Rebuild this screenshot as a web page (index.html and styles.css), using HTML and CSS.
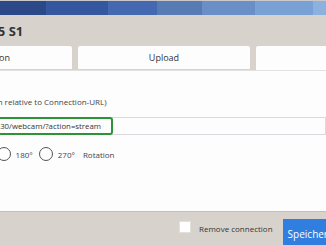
FILE: index.html
```html
<!DOCTYPE html>
<html lang="de">
<head>
  <meta charset="UTF-8">
  <meta name="viewport" content="width=device-width, initial-scale=1.0">
  <title>Drucker bearbeiten</title>
  <link rel="stylesheet" href="styles.css">
</head>
<body>

  <!-- Farbleiste oben -->
  <div class="topbar">
    <span class="s1"></span><span class="s2"></span><span class="s3"></span><span class="s4"></span><span class="s5"></span><span class="s6"></span><span class="s7"></span>
  </div>

  <div class="head">
    <h1 class="title">Ender-5 S1</h1>
  </div>

  <div class="tabs">
    <div class="tab">Connection</div>
    <div class="tab">Upload</div>
    <div class="tab active">Webcam</div>
  </div>

  <div class="content">
    <div class="lbl">Stream URL (absolute or given relative to Connection-URL)</div>
    <div class="field">
      <span class="hl">http://192.168.178.30/webcam/?action=stream</span>
    </div>
    <div class="radios">
      <span class="radio"></span><span class="rtext">90°</span>
      <span class="radio"></span><span class="rtext">180°</span>
      <span class="radio"></span><span class="rtext">270°</span>
      <span class="rtext rot">Rotation</span>
    </div>
  </div>

  <!-- Fusszeile -->
  <div class="foot">
    <span class="check"></span>
    <span class="foot-label">Remove connection</span>
    <button class="save">Speichern</button>
  </div>

</body>
</html>
```

FILE: styles.css
```css
* { margin: 0; padding: 0; box-sizing: border-box; }

body {
  font-family: 'Open Sans', 'Noto Sans', sans-serif;
  width: 326px;
  height: 245px;
  overflow: hidden;
  background: #d7d3cc;
  color: #333;
}

.topbar {
  display: flex;
  height: 15px;
  border-top: 1px solid #c9c9cc;
}

.topbar span { height: 100%; flex-shrink: 0; }
.s1 { width: 46px; background: #2b4987; }
.s2 { width: 62px; background: #3457a0; }
.s3 { width: 49px; background: #4469b0; }
.s4 { width: 45px; background: #587bb3; }
.s5 { width: 53px; background: #6a8fc6; }
.s6 { width: 58px; background: #79a1d6; }
.s7 { width: 40px; background: #8db1df; }

.head {
  height: 31px;
  display: flex;
  align-items: center;
  white-space: nowrap;
}

.title {
  font-size: 13px;
  font-weight: 700;
  margin-left: -44px;
  color: #333;
}

.tabs {
  display: flex;
  gap: 6px;
  height: 24px;
  margin-left: -100px;
}

.tab {
  flex-shrink: 0;
  width: 172px;
  height: 23px;
  background: #fdfdfd;
  border-radius: 2px 2px 0 0;
  display: flex;
  align-items: center;
  justify-content: center;
  font-size: 9px;
  color: #333;
}

.tab.active { height: 24px; width: 240px; }

.content {
  background: #fdfdfd;
  height: 141px;
  border-top: 1px solid #e4e2de;
  padding-top: 25px;
  white-space: nowrap;
}

.lbl {
  font-size: 8px;
  color: #444;
  margin-left: -110px;
  height: 12px;
  line-height: 12px;
}

.field {
  margin-top: 9px;
  height: 18px;
  margin-left: -87px;
  border: 1px solid #d9d9df;
  border-left: none;
  display: flex;
}

.hl {
  margin: -1px 0;
  height: 18px;
  border: 2px solid #2b9434;
  border-radius: 3px;
  padding: 0 10px 0 16px;
  font-size: 7.8px;
  line-height: 14px;
  color: #333;
}

.radios {
  margin-top: 12px;
  display: flex;
  align-items: center;
  margin-left: -41px;
  height: 14px;
}

.radio {
  flex-shrink: 0;
  width: 14px;
  height: 14px;
  border: 1px solid #555;
  border-radius: 50%;
  margin-right: 5px;
}

.rtext {
  font-size: 8px;
  color: #444;
  margin-right: 6px;
}

.rot { margin-left: 2px; }

.foot {
  height: 34px;
  border-top: 1px solid #c4c0b9;
  display: flex;
  align-items: flex-start;
  padding-left: 179px;
  white-space: nowrap;
}

.check {
  flex-shrink: 0;
  width: 12px;
  height: 12px;
  margin-top: 9px;
  background: #fff;
  border: 1px solid #e2e0dc;
}

.foot-label {
  font-size: 8px;
  color: #333;
  margin-left: 8px;
  margin-top: 11px;
}

.save {
  flex-shrink: 0;
  margin-left: 10px;
  margin-top: 7px;
  height: 30px;
  padding: 0 5px;
  border: none;
  background: #2f7ee0;
  color: #fff;
  font-family: inherit;
  font-size: 10px;
  line-height: 24px;
  text-align: left;
}
```
